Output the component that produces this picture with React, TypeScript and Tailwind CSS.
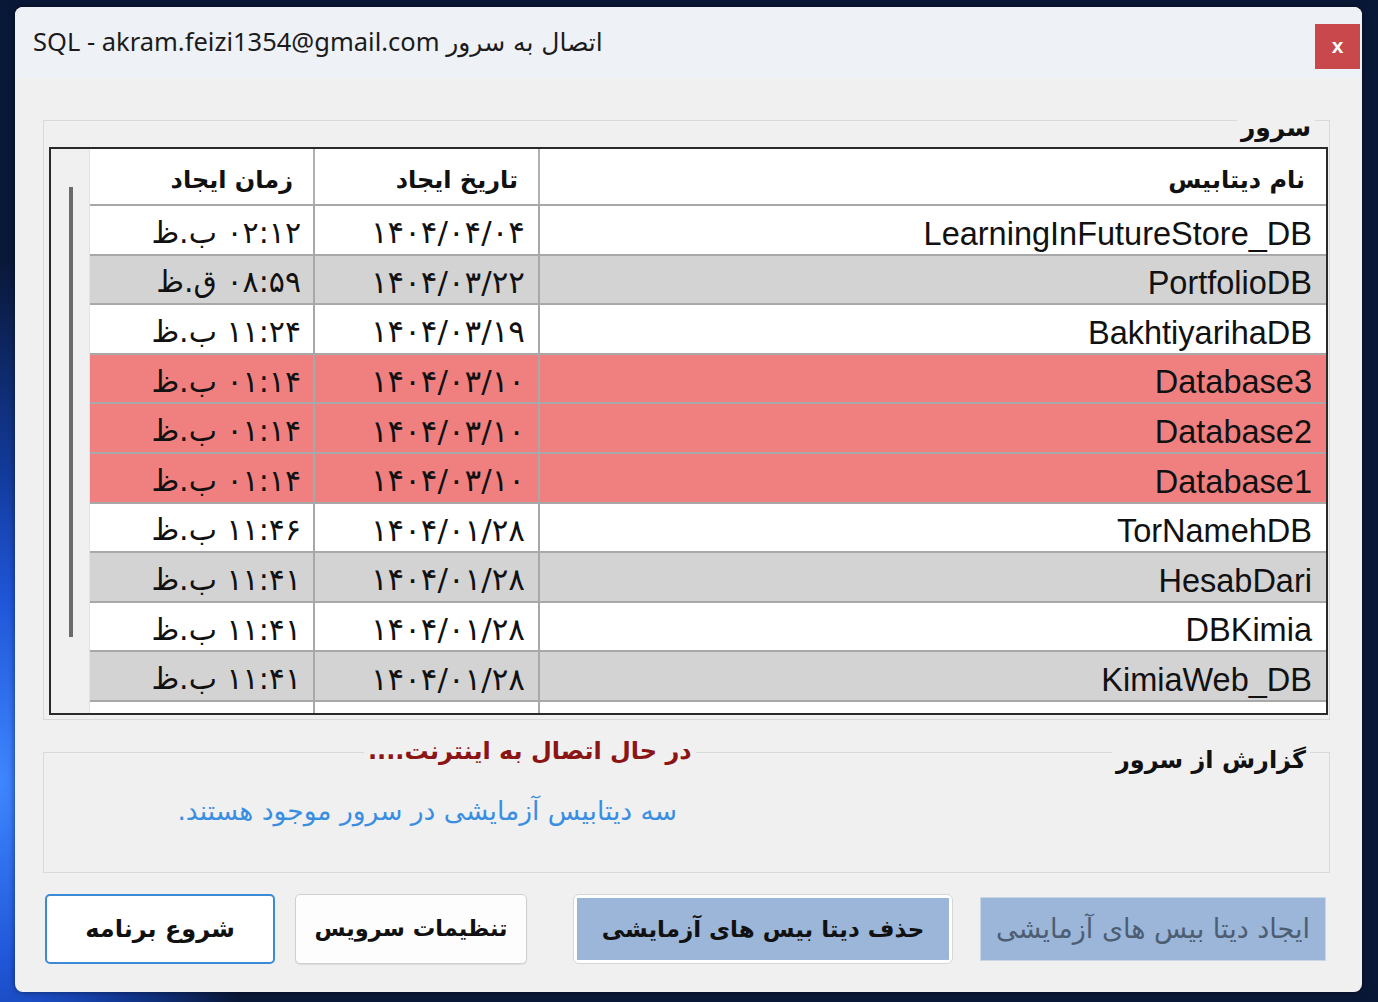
import React from "react";

type Row = { name: string; date: string; time: string; bg: string };

const WHITE = "bg-white";
const GRAY = "bg-[#d3d3d3]";
const RED = "bg-[#f08080]";

const rows: Row[] = [
  { name: "LearningInFutureStore_DB", date: "۱۴۰۴/۰۴/۰۴", time: "۰۲:۱۲ ب.ظ", bg: WHITE },
  { name: "PortfolioDB", date: "۱۴۰۴/۰۳/۲۲", time: "۰۸:۵۹ ق.ظ", bg: GRAY },
  { name: "BakhtiyarihaDB", date: "۱۴۰۴/۰۳/۱۹", time: "۱۱:۲۴ ب.ظ", bg: WHITE },
  { name: "Database3", date: "۱۴۰۴/۰۳/۱۰", time: "۰۱:۱۴ ب.ظ", bg: RED },
  { name: "Database2", date: "۱۴۰۴/۰۳/۱۰", time: "۰۱:۱۴ ب.ظ", bg: RED },
  { name: "Database1", date: "۱۴۰۴/۰۳/۱۰", time: "۰۱:۱۴ ب.ظ", bg: RED },
  { name: "TorNamehDB", date: "۱۴۰۴/۰۱/۲۸", time: "۱۱:۴۶ ب.ظ", bg: WHITE },
  { name: "HesabDari", date: "۱۴۰۴/۰۱/۲۸", time: "۱۱:۴۱ ب.ظ", bg: GRAY },
  { name: "DBKimia", date: "۱۴۰۴/۰۱/۲۸", time: "۱۱:۴۱ ب.ظ", bg: WHITE },
  { name: "KimiaWeb_DB", date: "۱۴۰۴/۰۱/۲۸", time: "۱۱:۴۱ ب.ظ", bg: GRAY },
];

const FA = "font-['Liberation_Sans','DejaVu_Sans',sans-serif]";

export default function App() {
  return (
    <div className="w-[1378px] h-[1002px] overflow-hidden pt-[7px] pl-[15px] bg-[#0a1838] bg-[radial-gradient(ellipse_260px_520px_at_0%_78%,#3f86ff_0%,#1f56d8_35%,#133a9a_60%,#0a1838_100%)]">
      <div className="w-[1347px] h-[985px] rounded-[8px] overflow-hidden bg-[#f0f0f0] flex flex-col shadow-[0_0_6px_rgba(0,0,0,0.5)]">
        {/* Title bar */}
        <div className="h-[71px] bg-[#eef1f6] flex items-start">
          <div
            dir="ltr"
            className="pl-[18px] pt-[17px] text-[25.5px] leading-[34px] text-[#1b1b1b] font-['Noto_Sans','DejaVu_Sans',sans-serif]"
          >
            SQL - akram.feizi1354@gmail.com <span className="font-['DejaVu_Sans',sans-serif] text-[25px]">اتصال به سرور</span>
          </div>
          <div className="ml-auto mt-[17px] mr-[2px] w-[45px] h-[45px] bg-[#c9484b] flex items-center justify-center text-white font-bold text-[21px] leading-none font-['Liberation_Sans',sans-serif] pb-[3px]">
            x
          </div>
        </div>

        {/* Body */}
        <div className={`flex-1 pt-[42px] pl-[28px] pr-[32px] ${FA} text-[#111]`}>
          {/* Group: server */}
          <div className="relative h-[600px] border border-[#d9d9d9] pt-[26px] pl-[5px] pr-[1px]">
            <div dir="rtl" className="absolute right-[14px] top-[-9px] px-[4px] bg-[#f0f0f0] text-[25px] leading-[32px] font-bold font-['DejaVu_Sans',sans-serif]">
              سرور
            </div>
            <div className="h-[568px] border-2 border-[#2a2a2a] flex bg-white overflow-hidden">
              <div className="w-[39px] h-full bg-[#f0f0f0] border-r border-[#e2e2e2] pt-[38px] pl-[18px]">
                <div className="w-[4px] h-[450px] bg-[#6b6b6b]" />
              </div>
              <div className="flex-1 flex flex-col">
                <div className="h-[57px] shrink-0 flex bg-white border-b-2 border-[#a8a8a8] font-bold font-['DejaVu_Sans',sans-serif] text-[24px]">
                  <div dir="rtl" className="w-[225px] border-r-2 border-[#b0b0b0] flex items-center pr-[20px] pt-[7px]">زمان ایجاد</div>
                  <div dir="rtl" className="w-[225px] border-r-2 border-[#b0b0b0] flex items-center pr-[20px] pt-[7px]">تاریخ ایجاد</div>
                  <div dir="rtl" className="flex-1 flex items-center pr-[21px] pt-[7px]">نام دیتابیس</div>
                </div>
                {rows.map((r, i) => (
                  <div key={i} className={`h-[49.6px] shrink-0 flex border-b-2 border-[#a8a8a8] ${r.bg}`}>
                    <div dir="rtl" className="w-[225px] border-r-2 border-[#a8a8a8] flex items-center pr-[12px] pt-[6px] text-[30px] leading-none font-['DejaVu_Sans',sans-serif]">
                      {r.time}
                    </div>
                    <div dir="rtl" className="w-[225px] border-r-2 border-[#a8a8a8] flex items-center pr-[13px] pt-[6px] text-[31px] leading-none font-['DejaVu_Sans',sans-serif]">
                      {r.date}
                    </div>
                    <div className="flex-1 flex items-center justify-end pr-[14px] pt-[8px] text-[32.5px] leading-none font-['Liberation_Sans',sans-serif]">
                      {r.name}
                    </div>
                  </div>
                ))}
                <div className="flex-1 flex bg-white">
                  <div className="w-[225px] border-r-2 border-[#a8a8a8]" />
                  <div className="w-[225px] border-r-2 border-[#a8a8a8]" />
                  <div className="flex-1" />
                </div>
              </div>
            </div>
          </div>

          {/* Group: report */}
          <div className="relative mt-[32px] h-[121px] border border-[#d9d9d9]">
            <div dir="rtl" className="absolute right-[19px] top-[-10px] px-[4px] bg-[#f0f0f0] text-[24px] leading-[34px] font-bold font-['DejaVu_Sans',sans-serif]">
              گزارش از سرور
            </div>
            <div dir="rtl" className="absolute left-[320px] top-[-19px] px-[4px] bg-[#f0f0f0] text-[24px] leading-[34px] font-bold text-[#8b1414] font-['DejaVu_Sans',sans-serif]">
              در حال اتصال به اینترنت....
            </div>
            <div dir="rtl" className="w-[633px] pt-[41px] text-right text-[26.5px] leading-[34px] text-[#3a8ee2] font-['DejaVu_Sans',sans-serif]">
              سه دیتابیس آزمایشی در سرور موجود هستند.
            </div>
          </div>

          {/* Buttons */}
          <div className="mt-[21px] flex items-start font-['DejaVu_Sans',sans-serif] text-[24px]">
            <div dir="rtl" className="ml-[2px] w-[230px] h-[70px] border-2 border-[#3b8ad6] rounded-[5px] bg-white flex items-center justify-center font-bold">
              شروع برنامه
            </div>
            <div dir="rtl" className="ml-[20px] w-[232px] h-[70px] border border-[#d0d0d0] rounded-[5px] bg-[#fdfdfd] flex items-center justify-center font-bold text-[22.5px] shadow-[0_1px_1px_rgba(0,0,0,0.08)]">
              تنظیمات سرویس
            </div>
            <div className="ml-[46px] w-[380px] h-[70px] p-[3px] border border-[#d6d6d6] rounded-[6px] bg-white">
              <div dir="rtl" className="w-full h-full bg-[#9bb6d8] flex items-center justify-center font-bold text-[23px]">
                حذف دیتا بیس های آزمایشی
              </div>
            </div>
            <div dir="rtl" className="ml-[27px] mt-[3px] w-[346px] h-[64px] bg-[#9bb6d8] border border-[#c8d6e6] flex items-center justify-center text-[27px] text-[#4d5d72]">
              ایجاد دیتا بیس های آزمایشی
            </div>
          </div>
        </div>
      </div>
    </div>
  );
}
